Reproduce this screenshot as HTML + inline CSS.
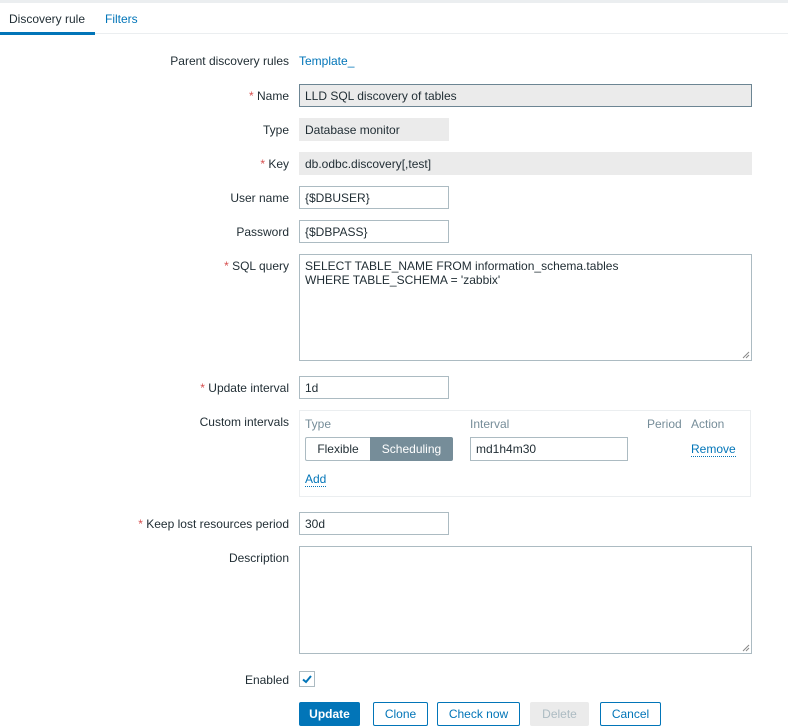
<!DOCTYPE html>
<html><head><style>
body{margin:0;width:788px;height:724px;background:#fff;font-family:"Liberation Sans",Arial,sans-serif;font-size:12px;color:#1f2c33;position:relative;overflow:hidden}
.a{position:absolute}
.lbl{position:absolute;right:499px;text-align:right;white-space:nowrap;line-height:14px}
.r{color:#d64e4e}
.in{position:absolute;box-sizing:border-box;border:1px solid #acbbc2;background:#fff;padding:1px 5px 0;line-height:20px;white-space:pre}
.ro{background:#ebebeb;border-color:#ebebeb}
.btn{position:absolute;top:702px;height:24px;box-sizing:border-box;border:1px solid #0275b8;color:#0275b8;text-align:center;line-height:22px;border-radius:2px;background:#fff}
a{color:#0275b8;text-decoration:none}
.dot{border-bottom:1px dotted #0275b8}
.grip{position:absolute;right:1px;bottom:1px}
</style></head><body>
<div class="a" style="left:0;top:0;width:788px;height:3px;background:#ebeef0"></div>
<div class="a" style="left:0;top:33px;width:788px;height:1px;background:#ebeef0"></div>
<div class="a" style="left:9px;top:12px">Discovery rule</div>
<div class="a" style="left:105px;top:12px;color:#0275b8">Filters</div>
<div class="a" style="left:0;top:32px;width:95px;height:3px;background:#0275b8"></div>

<div class="lbl" style="top:54px">Parent discovery rules</div>
<div class="a" style="left:299px;top:54px;color:#0275b8">Template_</div>

<div class="lbl" style="top:89px"><span class="r">*</span> Name</div>
<div class="in ro" style="left:299px;top:84px;width:453px;height:23px;border-color:#6c8593">LLD SQL discovery of tables</div>
<div class="lbl" style="top:123px">Type</div>
<div class="in ro" style="left:299px;top:118px;width:150px;height:23px">Database monitor</div>
<div class="lbl" style="top:157px"><span class="r">*</span> Key</div>
<div class="in ro" style="left:299px;top:152px;width:453px;height:23px">db.odbc.discovery[,test]</div>
<div class="lbl" style="top:191px">User name</div>
<div class="in" style="left:299px;top:186px;width:150px;height:23px">{$DBUSER}</div>
<div class="lbl" style="top:225px">Password</div>
<div class="in" style="left:299px;top:220px;width:150px;height:23px">{$DBPASS}</div>
<div class="lbl" style="top:259px"><span class="r">*</span> SQL query</div>
<div class="in" style="left:299px;top:254px;width:453px;height:107px;line-height:14px;padding-top:4px">SELECT TABLE_NAME FROM information_schema.tables
WHERE TABLE_SCHEMA = 'zabbix'<svg class="grip" width="8" height="8"><path d="M7 1L1 7M7 4L4 7" stroke="#888" stroke-width="1"/></svg></div>
<div class="lbl" style="top:381px"><span class="r">*</span> Update interval</div>
<div class="in" style="left:299px;top:376px;width:150px;height:23px">1d</div>

<div class="lbl" style="top:415px">Custom intervals</div>
<div class="a" style="left:299px;top:410px;width:452px;height:87px;box-sizing:border-box;border:1px solid #ebeef0"></div>
<div class="a" style="left:305px;top:417px;color:#768d99">Type</div>
<div class="a" style="left:470px;top:417px;color:#768d99">Interval</div>
<div class="a" style="left:647px;top:417px;color:#768d99">Period</div>
<div class="a" style="left:691px;top:417px;color:#768d99">Action</div>
<div class="a" style="left:305px;top:437px;width:65px;height:24px;box-sizing:border-box;border:1px solid #acbbc2;border-right:none;text-align:center;line-height:22px;border-radius:2px 0 0 2px">Flexible</div>
<div class="a" style="left:370px;top:437px;width:83px;height:24px;background:#768d99;color:#fff;text-align:center;line-height:24px;border-radius:0 2px 2px 0">Scheduling</div>
<div class="in" style="left:470px;top:437px;width:158px;height:24px">md1h4m30</div>
<div class="a" style="left:691px;top:442px"><a class="dot">Remove</a></div>
<div class="a" style="left:305px;top:472px"><a class="dot">Add</a></div>

<div class="lbl" style="top:517px"><span class="r">*</span> Keep lost resources period</div>
<div class="in" style="left:299px;top:512px;width:150px;height:23px">30d</div>
<div class="lbl" style="top:551px">Description</div>
<div class="in" style="left:299px;top:546px;width:453px;height:108px"><svg class="grip" width="8" height="8"><path d="M7 1L1 7M7 4L4 7" stroke="#888" stroke-width="1"/></svg></div>
<div class="lbl" style="top:673px">Enabled</div>
<div class="a" style="left:299px;top:671px;width:16px;height:16px;box-sizing:border-box;border:1px solid #acbbc2">
<svg width="14" height="14" viewBox="0 0 14 14" style="position:absolute;left:0;top:0"><path d="M3 7.5 L6 10 L11 4" fill="none" stroke="#0275b8" stroke-width="2"/></svg></div>

<div class="btn" style="left:299px;width:61px;background:#0275b8;color:#fff;font-weight:bold">Update</div>
<div class="btn" style="left:373px;width:55px">Clone</div>
<div class="btn" style="left:437px;width:83px">Check now</div>
<div class="btn" style="left:530px;width:59px;background:#ebebeb;border-color:#ebebeb;color:#acbbc2">Delete</div>
<div class="btn" style="left:600px;width:61px">Cancel</div>
</body></html>
